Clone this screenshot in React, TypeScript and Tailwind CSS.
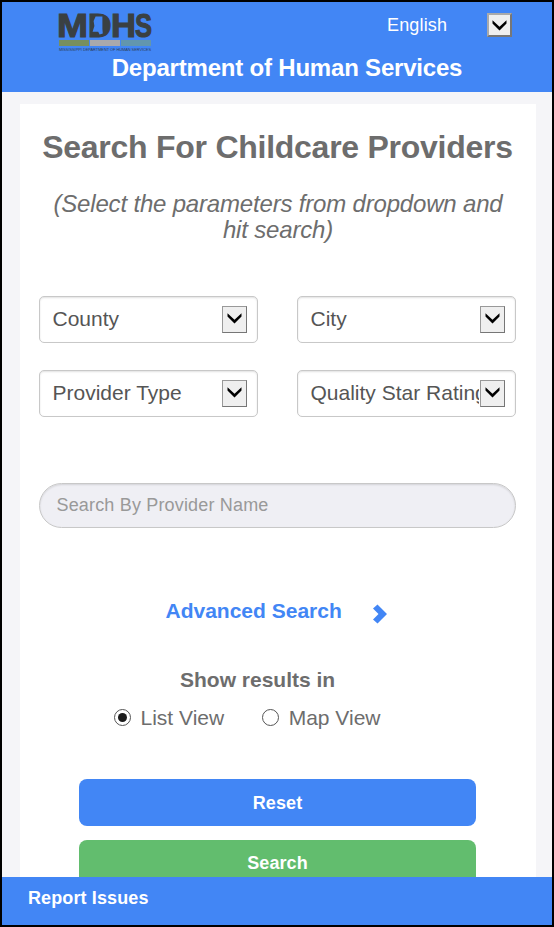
import React from "react";

function Chevron() {
  return (
    <svg width="17" height="13" viewBox="0 0 17 13" className="shrink-0">
      <path d="M1.5 1.2V4.6L8.5 11.5L15.5 4.6V1.2L8.5 7.8Z" fill="#000" />
    </svg>
  );
}

function Logo() {
  return (
    <svg width="94" height="41" viewBox="0 0 94 41" className="block overflow-visible" fontFamily="'Liberation Sans', Arial, sans-serif">
      <g fontWeight="700" fontSize="34" fill="#3a4042" stroke="#3a4042" strokeWidth="1.1">
        <text x="-2" y="25.5" textLength="31" lengthAdjust="spacingAndGlyphs">M</text>
        <text x="29" y="25.5" textLength="23.5" lengthAdjust="spacingAndGlyphs">D</text>
        <text x="52" y="25.5" textLength="25" lengthAdjust="spacingAndGlyphs">H</text>
        <text x="76" y="25.5" textLength="17" lengthAdjust="spacingAndGlyphs">S</text>
      </g>
      <path d="M32 3.5H43Q50 6 50 13.5Q50 22 43 24.5H32Z" fill="#3a4042" />
      <path d="M36.6 5.5H43.4V18L43.8 22.5L40.6 23.6L39.2 20.8H33.6L35.4 15L34.6 10Z" fill="#4286f5" />
      <path d="M0 29H30V35H0Z" fill="#778f5f" />
      <path d="M31 29H61V35H31Z" fill="#a9a9ac" />
      <path d="M62 29H92V35H62Z" fill="#6296ae" />
      <text x="0" y="40" fontSize="4.4" fill="#2c3a50" textLength="92" lengthAdjust="spacingAndGlyphs">MISSISSIPPI DEPARTMENT OF HUMAN SERVICES</text>
    </svg>
  );
}

function Select({ label }: { label: string }) {
  return (
    <button className="flex h-[47px] w-[219px] items-center justify-between rounded-[5px] border border-[#c8c8c8] bg-white pr-[10px] pl-[12.5px] text-left text-[21px] text-[#555] shadow-[inset_0_1px_2px_rgba(0,0,0,0.12)]">
      <span className="mb-[2px] w-[168px] overflow-hidden whitespace-nowrap leading-[26px]">{label}</span>
      <span className="flex h-[27px] w-[25px] shrink-0 items-center justify-center border border-[#767676] border-t-[#999] border-l-[#999] bg-[#efefef] pb-[2px]">
        <Chevron />
      </span>
    </button>
  );
}

function Radio({ label, checked }: { label: string; checked?: boolean }) {
  return (
    <div className="flex items-center">
      <span className="mb-[2px] flex size-[17px] items-center justify-center rounded-full border border-[#555] bg-white">
        {checked && <span className="size-[9px] rounded-full bg-[#1b1b1b]" />}
      </span>
      <span className="ml-[9.5px] text-[21px] leading-6">{label}</span>
    </div>
  );
}

export default function App() {
  return (
    <div className="flex h-[927px] w-[554px] flex-col overflow-hidden border-2 border-black bg-[#f5f5f8] font-['Liberation_Sans',Arial,sans-serif] text-[#6d6d6d]">
      <header className="h-[90px] shrink-0 bg-[#4286f5] text-white">
        <div className="flex h-[51px] items-start pt-[11px] pl-[57px]">
          <div className="-mt-[2px]">
            <Logo />
          </div>
          <span className="ml-[234px] w-[100px] text-[18px] leading-6 tracking-[0.15px]">English</span>
          <span className="flex h-6 w-[25px] items-center justify-center border-2 border-[#777] border-t-[#aaa] border-l-[#aaa] bg-[#efefef]">
            <Chevron />
          </span>
        </div>
        <h2 className="pl-5 text-center text-[24px] leading-[30px] font-bold tracking-[-0.2px]">Department of Human Services</h2>
      </header>
      <main className="mt-3 ml-[18px] flex h-[773px] w-[516px] shrink-0 flex-col overflow-hidden bg-white">
        <h1 className="mt-[23px] pr-px text-center text-[32px] leading-10 font-bold tracking-[-0.26px] whitespace-nowrap">Search For Childcare Providers</h1>
        <p className="mt-[24px] px-[25px] text-center text-[24px] leading-[26px] tracking-[-0.18px] italic">(Select the parameters from dropdown and hit search)</p>
        <div className="mt-[53px] mr-5 ml-[19px] grid grid-cols-2 gap-x-[39px] gap-y-[27px]">
          <Select label="County" />
          <Select label="City" />
          <Select label="Provider Type" />
          <Select label="Quality Star Rating" />
        </div>
        <input
          placeholder="Search By Provider Name"
          className="mt-[66px] mr-5 ml-[19px] h-[45px] shrink-0 rounded-full border border-[#c8c8c8] bg-[#efeff4] px-[16.5px] text-[18px] tracking-[0.17px] shadow-[inset_0_1px_2px_rgba(0,0,0,0.12)] placeholder:text-[#999]"
        />
        <div className="mt-[70px] flex items-center pl-[145.5px] text-[#4286f5]">
          <span className="text-[21px] leading-6 font-bold">Advanced Search</span>
          <svg width="15" height="20" viewBox="0 0 15 20" className="mt-[6px] ml-[31.5px]">
            <path d="M0 4.5L4.5 0.5L14 10L4.5 19.5L0 15.5L5.5 10Z" fill="currentColor" />
          </svg>
        </div>
        <div className="mt-[44px] pl-[160px] text-[21px] leading-6 font-bold">Show results in</div>
        <div className="mt-[14px] flex gap-[38px] pl-[94px]">
          <Radio label="List View" checked />
          <Radio label="Map View" />
        </div>
        <div className="mt-[49px] mr-[60px] ml-[59px] flex flex-col gap-[14px] text-[18px] font-bold text-white">
          <button className="h-[47px] rounded-lg bg-[#4286f5] pt-px tracking-[0.1px]">Reset</button>
          <button className="h-[47px] rounded-lg bg-[#62bd6e] tracking-[0.1px]">Search</button>
        </div>
      </main>
      <footer className="h-12 shrink-0 bg-[#4286f5] pt-[9px] pl-[26px] text-[18px] leading-6 font-bold tracking-[0.12px] text-white">Report Issues</footer>
    </div>
  );
}
